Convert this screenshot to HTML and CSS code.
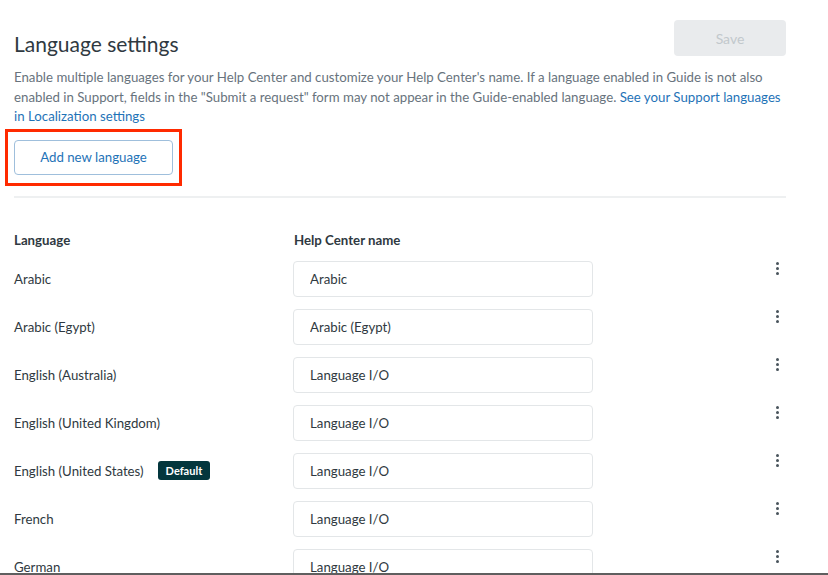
FILE: index.html
```html
<!DOCTYPE html>
<html lang="en">
<head>
    <meta charset="UTF-8">
    <meta name="viewport" content="width=device-width, initial-scale=1.0">
    <title>Language settings</title>
    <link rel="stylesheet" href="styles.css">
</head>
<body>
    <div class="page">
        <div class="header">
            <h1>Language settings</h1>
            <button class="save-btn" type="button" disabled>Save</button>
        </div>

        <p class="intro">
            Enable multiple languages for your Help Center and customize your Help Center's name. If a language enabled in Guide is not also enabled in Support, fields in the "Submit a request" form may not appear in the Guide-enabled language.
            <a href="#">See your Support languages in Localization settings</a>
        </p>

        <div class="highlight">
            <button class="add-btn" type="button">Add new language</button>
        </div>

        <hr class="divider">

        <div class="lang-table">
            <div class="lang-row head">
                <div class="col-lang">Language</div>
                <div class="col-name">Help Center name</div>
                <div class="col-menu"></div>
            </div>

            <div class="lang-row">
                <div class="col-lang">Arabic</div>
                <div class="col-name"><input class="name-input" type="text" value="Arabic"></div>
                <div class="col-menu"><span class="dots"><i></i><i></i><i></i></span></div>
            </div>
            <div class="lang-row">
                <div class="col-lang">Arabic (Egypt)</div>
                <div class="col-name"><input class="name-input" type="text" value="Arabic (Egypt)"></div>
                <div class="col-menu"><span class="dots"><i></i><i></i><i></i></span></div>
            </div>
            <div class="lang-row">
                <div class="col-lang">English (Australia)</div>
                <div class="col-name"><input class="name-input" type="text" value="Language I/O"></div>
                <div class="col-menu"><span class="dots"><i></i><i></i><i></i></span></div>
            </div>
            <div class="lang-row">
                <div class="col-lang">English (United Kingdom)</div>
                <div class="col-name"><input class="name-input" type="text" value="Language I/O"></div>
                <div class="col-menu"><span class="dots"><i></i><i></i><i></i></span></div>
            </div>
            <div class="lang-row">
                <div class="col-lang">English (United States) <span class="badge">Default</span></div>
                <div class="col-name"><input class="name-input" type="text" value="Language I/O"></div>
                <div class="col-menu"><span class="dots"><i></i><i></i><i></i></span></div>
            </div>
            <div class="lang-row">
                <div class="col-lang">French</div>
                <div class="col-name"><input class="name-input" type="text" value="Language I/O"></div>
                <div class="col-menu"><span class="dots"><i></i><i></i><i></i></span></div>
            </div>
            <div class="lang-row">
                <div class="col-lang">German</div>
                <div class="col-name"><input class="name-input" type="text" value="Language I/O"></div>
                <div class="col-menu"><span class="dots"><i></i><i></i><i></i></span></div>
            </div>
        </div>
    </div>

    <div class="window-edge"></div>
</body>
</html>
```

FILE: styles.css
```css
:root {
    --text-color: #2f3941;
    --muted-color: #68737d;
    --link-color: #1f73b7;
    --border-color: #e3e6e8;
    --kale: #03363d;
}

* {
    margin: 0;
    padding: 0;
    box-sizing: border-box;
}

body {
    font-family: Lato, 'Open Sans', sans-serif;
    background: #fff;
    color: var(--text-color);
    overflow: hidden;
    height: 575px;
}

.page {
    padding: 20px 42px 0 14px;
}

/* Header */
.header {
    display: flex;
    justify-content: space-between;
    align-items: flex-start;
    height: 36px;
}

.header h1 {
    font-size: 21px;
    font-weight: 400;
    margin-top: 11px;
    line-height: 26px;
}

.save-btn {
    width: 112px;
    height: 36px;
    border: none;
    border-radius: 4px;
    background: #e9ebed;
    color: #c2c8cc;
    font-family: inherit;
    font-size: 14px;
}

.intro {
    margin-top: 12px;
    font-size: 13.25px;
    line-height: 19.5px;
    color: var(--muted-color);
}

.intro a {
    color: var(--link-color);
    text-decoration: none;
}

/* Red callout round the add button */
.highlight {
    display: inline-block;
    margin: 2px 0 0 -9px;
    padding: 8px 6px;
    border: 3px solid #ff2a00;
}

.add-btn {
    display: block;
    width: 159px;
    height: 35px;
    border: 1px solid #9fbfdc;
    border-radius: 4px;
    background: #fff;
    color: var(--link-color);
    font-family: inherit;
    font-size: 13.25px;
}

.divider {
    border: none;
    border-top: 2px solid #eef0f1;
    margin-top: 10px;
}

/* Language table */
.lang-table {
    margin-top: 30px;
}

.lang-row {
    display: flex;
    align-items: center;
    height: 48px;
    font-size: 13.25px;
}

.lang-row.head {
    height: 24px;
    font-weight: 700;
    margin-bottom: 3px;
}

.col-lang {
    width: 279px;
    display: flex;
    align-items: center;
    gap: 14px;
}

.col-name {
    width: 300px;
}

.col-menu {
    flex: 1;
    display: flex;
    justify-content: flex-end;
    padding-right: 7px;
    align-self: flex-start;
    padding-top: 7px;
}

.lang-row.head .col-name {
    margin-left: 1px;
}

.name-input {
    width: 300px;
    height: 36px;
    border: 1px solid var(--border-color);
    border-radius: 4px;
    padding: 0 16px;
    font-family: inherit;
    font-size: 13.25px;
    color: var(--text-color);
    background: #fff;
    outline: none;
}

.badge {
    background: var(--kale);
    color: #fff;
    font-size: 11px;
    font-weight: 700;
    padding: 3px 8px;
    border-radius: 3px;
    line-height: 13px;
}

.dots {
    display: flex;
    flex-direction: column;
    gap: 2px;
}

.dots i {
    display: block;
    width: 3px;
    height: 3px;
    border-radius: 50%;
    background: #49545c;
}

.window-edge {
    position: fixed;
    left: 0;
    right: 0;
    bottom: 0;
    height: 2px;
    background: #5f5f5f;
}
```
